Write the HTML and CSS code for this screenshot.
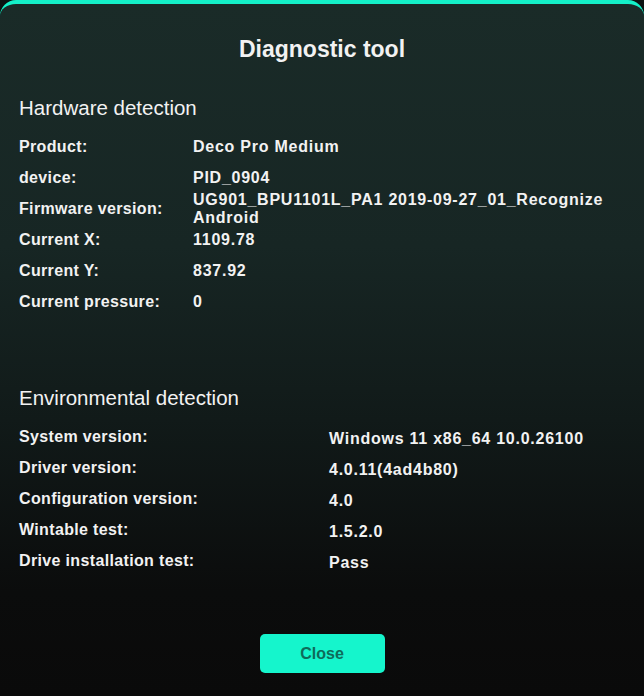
FILE: index.html
```html
<!DOCTYPE html>
<html>
<head>
    <title>Diagnostic tool</title>
    <meta charset="UTF-8">
    <meta name="viewport" content="width=device-width, initial-scale=1.0">
    <link rel="stylesheet" href="styles.css">
</head>
<body>
    <div class="dialog">
        <h1 class="dialog-title">Diagnostic tool</h1>

        <h2 class="section-title">Hardware detection</h2>
        <div class="info-list hardware">
            <div class="info-row"><span class="info-label">Product:</span><span class="info-value">Deco Pro Medium</span></div>
            <div class="info-row"><span class="info-label">device:</span><span class="info-value">PID_0904</span></div>
            <div class="info-row"><span class="info-label">Firmware version:</span><span class="info-value">UG901_BPU1101L_PA1 2019-09-27_01_Recognize Android</span></div>
            <div class="info-row"><span class="info-label">Current X:</span><span class="info-value">1109.78</span></div>
            <div class="info-row"><span class="info-label">Current Y:</span><span class="info-value">837.92</span></div>
            <div class="info-row"><span class="info-label">Current pressure:</span><span class="info-value">0</span></div>
        </div>

        <h2 class="section-title env-title">Environmental detection</h2>
        <div class="info-list environment">
            <div class="info-row"><span class="info-label">System version:</span><span class="info-value">Windows 11 x86_64 10.0.26100</span></div>
            <div class="info-row"><span class="info-label">Driver version:</span><span class="info-value">4.0.11(4ad4b80)</span></div>
            <div class="info-row"><span class="info-label">Configuration version:</span><span class="info-value">4.0</span></div>
            <div class="info-row"><span class="info-label">Wintable test:</span><span class="info-value">1.5.2.0</span></div>
            <div class="info-row"><span class="info-label">Drive installation test:</span><span class="info-value">Pass</span></div>
        </div>

        <div class="actions">
            <button type="button" class="close-button">Close</button>
        </div>
    </div>
</body>
</html>
```

FILE: styles.css
```css
html, body {
    margin: 0;
    padding: 0;
    background-color: #0b1211;
}

body {
    font-family: "Liberation Sans", Arial, sans-serif;
    color: #f2f2f2;
}

.dialog {
    box-sizing: border-box;
    height: 696px;
    padding: 33px 19px 0 19px;
    border-top: 4px solid #14f0c8;
    border-radius: 16px 16px 0 0;
    background: linear-gradient(180deg, #1a2b28 0%, #172624 35%, #111a19 60%, #0b0c0c 85%, #0a0a0a 100%);
}

.dialog-title {
    margin: 0;
    text-align: center;
    font-size: 23px;
    line-height: 24px;
    font-weight: bold;
}

.section-title {
    margin: 36px 0 12px 0;
    font-size: 20.5px;
    line-height: 22px;
    font-weight: normal;
}

.env-title {
    margin-top: 70px;
    margin-bottom: 12px;
}

.info-row {
    display: flex;
    align-items: center;
    height: 31px;
    font-size: 16px;
    font-weight: bold;
    letter-spacing: 0.35px;
}

.info-label {
    flex: none;
}

.hardware .info-label {
    width: 174px;
}

.environment .info-label {
    width: 310px;
}

.info-value {
    flex: 1;
    line-height: 18px;
    letter-spacing: 0.75px;
}

.environment .info-value {
    margin-top: 4px;
}

.actions {
    display: flex;
    justify-content: center;
    margin-top: 58px;
}

.close-button {
    width: 125px;
    height: 39px;
    border: none;
    border-radius: 5px;
    background-color: #15f5cc;
    color: #0e6c5a;
    font-family: "Liberation Sans", Arial, sans-serif;
    font-size: 16px;
    font-weight: bold;
    cursor: pointer;
}
```
